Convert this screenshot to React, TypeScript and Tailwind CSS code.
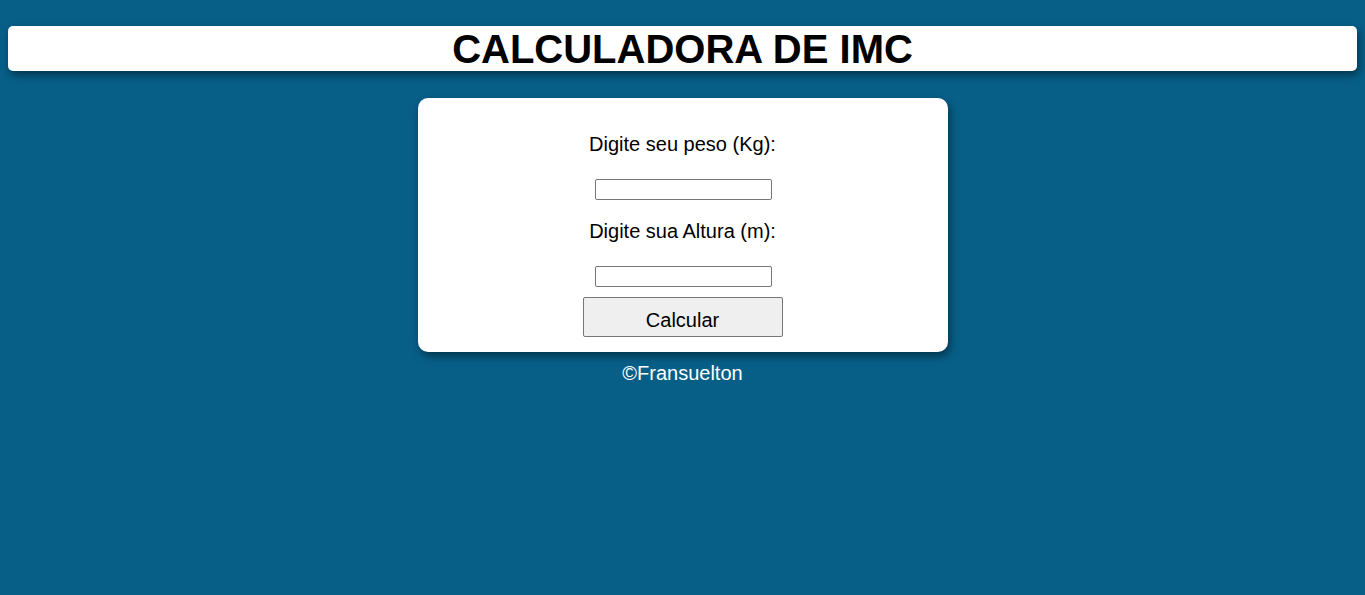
export default function App() {
  return (
    <div className="min-h-[595px] bg-[#075f88] px-2 pt-[26px] font-['Liberation_Sans',Arial,sans-serif]">
      <header className="flex h-[45px] items-center justify-center rounded-[5px] bg-white shadow-[2px_4px_8px_rgba(0,0,0,0.45)]">
        <h1 className="text-[40px] font-bold leading-[46px] text-black">CALCULADORA DE IMC</h1>
      </header>

      <main className="flex flex-col items-center">
        <div className="mt-[27px] flex w-[530px] flex-col items-center rounded-[10px] bg-white pt-[35px] pb-[15px] shadow-[2px_4px_8px_rgba(0,0,0,0.45)]">
          <label htmlFor="peso" className="text-[20px] leading-[23px] text-black">
            Digite seu peso (Kg):
          </label>
          <input
            id="peso"
            type="text"
            className="mt-[23px] ml-px h-[21px] w-[177px] rounded-[2px] border border-[#767676] bg-white px-[2px] text-[13px]"
          />
          <label htmlFor="altura" className="mt-[20px] text-[20px] leading-[23px] text-black">
            Digite sua Altura (m):
          </label>
          <input
            id="altura"
            type="text"
            className="mt-[23px] ml-px h-[21px] w-[177px] rounded-[2px] border border-[#767676] bg-white px-[2px] text-[13px]"
          />
          <button
            type="button"
            className="mt-[10px] h-[40px] w-[200px] rounded-[2px] border border-[#767676] bg-[#efefef] pt-[5px] text-[20px] text-black"
          >
            Calcular
          </button>
        </div>
        <p className="mt-[10px] text-[20px] leading-[23px] text-white">©Fransuelton</p>
      </main>
    </div>
  );
}
